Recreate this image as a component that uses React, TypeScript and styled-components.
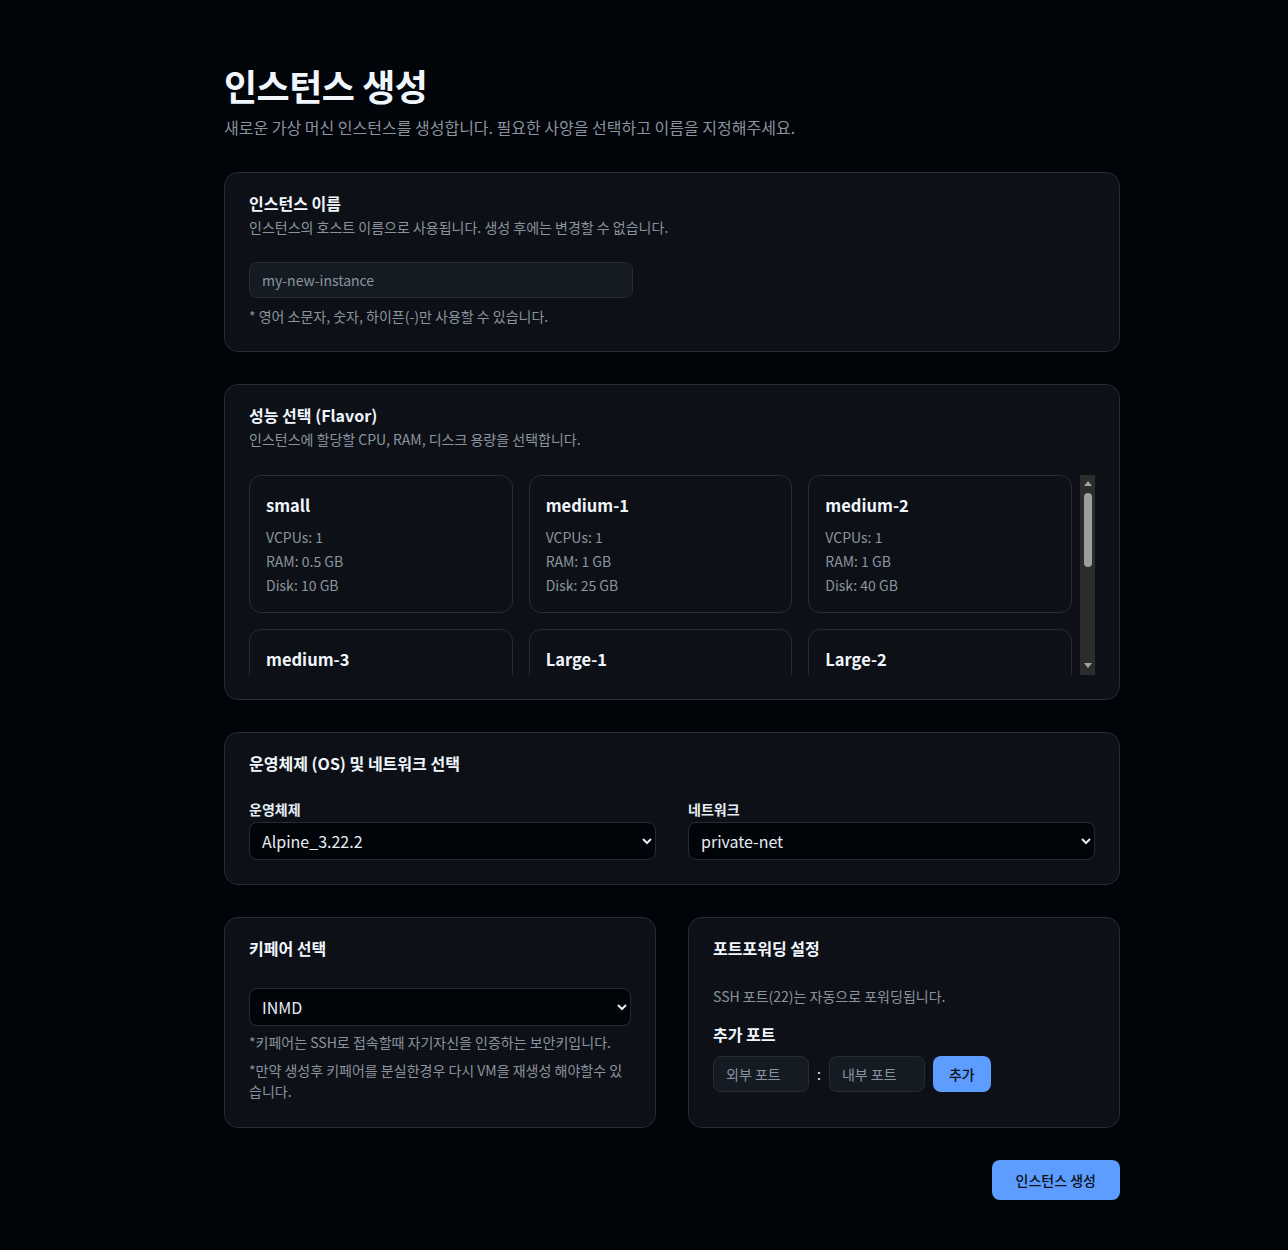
import React from "react";
import styled, { createGlobalStyle } from "styled-components";

const Global = createGlobalStyle`
  html { color-scheme: dark; }
  body {
    margin: 0;
    background: #010409;
    color: #e6edf3;
    font-family: "Noto Sans CJK KR", "Noto Sans", sans-serif;
  }
  * { box-sizing: border-box; }
`;

const Page = styled.main`
  width: 896px;
  margin: 0 0 0 224px;
  padding: 59px 0 50px;
  display: flex;
  flex-direction: column;
  gap: 32px;
`;

const Header = styled.header`
  display: flex;
  flex-direction: column;
  gap: 4px;
  margin-bottom: 1px;
`;

const Title = styled.h1`
  margin: 0;
  font-size: 36px;
  font-weight: 700;
  line-height: 52px;
  letter-spacing: -0.5px;
  color: #f0f6fc;
`;

const Subtitle = styled.p`
  margin: 0;
  font-size: 16px;
  line-height: 24px;
  color: #8b949e;
`;

const Card = styled.section<{ $pb?: number }>`
  background: #0d1117;
  border: 1px solid #262c36;
  border-radius: 14px;
  padding: 18px 24px ${(p) => p.$pb ?? 24}px;
  display: flex;
  flex-direction: column;
`;

const CardTitle = styled.h2`
  margin: 0 0 2px;
  font-size: 16px;
  font-weight: 700;
  line-height: 24px;
  color: #f0f6fc;
`;

const CardDesc = styled.p`
  margin: 0;
  font-size: 14px;
  line-height: 20px;
  color: #8b949e;
`;

const Spacer = styled.div<{ $h: number }>`
  height: ${(p) => p.$h}px;
  flex: none;
`;

const TextInput = styled.input<{ $w: number }>`
  width: ${(p) => p.$w}px;
  height: 36px;
  background: #151b23;
  border: 1px solid #262c36;
  border-radius: 8px;
  padding: 0 12px;
  font-family: inherit;
  font-size: 14px;
  color: #e6edf3;
  outline: none;
  &::placeholder { color: #8b949e; }
`;

const Hint = styled.p<{ $mt?: number }>`
  margin: ${(p) => p.$mt ?? 8}px 0 0;
  font-size: 14px;
  line-height: 21px;
  color: #8b949e;
`;

const FlavorArea = styled.div`
  margin-top: 26px;
  height: 200px;
  display: flex;
`;

const FlavorScroll = styled.div`
  flex: 1;
  min-width: 0;
  overflow: hidden;
`;

const FlavorGrid = styled.div`
  display: grid;
  grid-template-columns: repeat(3, 1fr);
  gap: 16px;
  padding-right: 8px;
`;

const FlavorCard = styled.div`
  border: 1px solid #262c36;
  border-radius: 12px;
  padding: 15px 16px 15px;
  display: flex;
  flex-direction: column;
`;

const FlavorName = styled.h3`
  margin: 0 0 6px;
  font-size: 16.5px;
  font-weight: 700;
  line-height: 28px;
  color: #f0f6fc;
`;

const Spec = styled.div`
  font-size: 14px;
  line-height: 24px;
  color: #8b949e;
`;

const ScrollTrack = styled.div`
  width: 15px;
  flex: none;
  background: #2c2c2c;
  display: flex;
  flex-direction: column;
  align-items: center;
  padding: 6px 0 7px;
`;

const Arrow = styled.div<{ $down?: boolean }>`
  width: 0;
  height: 0;
  border-left: 4.5px solid transparent;
  border-right: 4.5px solid transparent;
  ${(p) =>
    p.$down
      ? "border-top: 5px solid #a3a3a3; margin-top: auto;"
      : "border-bottom: 5px solid #a3a3a3;"}
`;

const Thumb = styled.div`
  width: 8px;
  height: 74px;
  margin-top: 7px;
  border-radius: 4px;
  background: #9e9e9e;
`;

const TwoCol = styled.div`
  display: grid;
  grid-template-columns: 1fr 1fr;
  gap: 32px;
`;

const Field = styled.label`
  display: flex;
  flex-direction: column;
  gap: 2px;
`;

const FieldLabel = styled.span`
  font-size: 14px;
  font-weight: 600;
  line-height: 22px;
  color: #e6edf3;
`;

const Select = styled.select`
  width: 100%;
  height: 38px;
  background: #010409;
  border: 1px solid #262c36;
  border-radius: 8px;
  padding: 0 8px;
  font-family: inherit;
  font-size: 16px;
  color: #e6edf3;
`;

const SubHeading = styled.h4`
  margin: 15px 0 10px;
  font-size: 16px;
  font-weight: 700;
  line-height: 24px;
  color: #f0f6fc;
`;

const PortRow = styled.div`
  display: flex;
  align-items: center;
  gap: 8px;
`;

const Colon = styled.span`
  font-size: 14px;
  color: #e6edf3;
`;

const Button = styled.button<{ $h: number; $px: number }>`
  height: ${(p) => p.$h}px;
  padding: 0 ${(p) => p.$px}px;
  background: #5c9dff;
  border: none;
  border-radius: 8px;
  font-family: inherit;
  font-size: 14px;
  font-weight: 500;
  color: #0d1117;
  cursor: pointer;
`;

const Footer = styled.div`
  display: flex;
  justify-content: flex-end;
`;

const flavors = [
  { name: "small", vcpu: 1, ram: "0.5", disk: 10 },
  { name: "medium-1", vcpu: 1, ram: "1", disk: 25 },
  { name: "medium-2", vcpu: 1, ram: "1", disk: 40 },
  { name: "medium-3", vcpu: 2, ram: "2", disk: 40 },
  { name: "Large-1", vcpu: 2, ram: "4", disk: 40 },
  { name: "Large-2", vcpu: 4, ram: "8", disk: 80 },
];

export default function App() {
  return (
    <>
      <Global />
      <Page>
        <Header>
          <Title>인스턴스 생성</Title>
          <Subtitle>새로운 가상 머신 인스턴스를 생성합니다. 필요한 사양을 선택하고 이름을 지정해주세요.</Subtitle>
        </Header>

        <Card>
          <CardTitle>인스턴스 이름</CardTitle>
          <CardDesc>인스턴스의 호스트 이름으로 사용됩니다. 생성 후에는 변경할 수 없습니다.</CardDesc>
          <Spacer $h={25} />
          <TextInput $w={384} placeholder="my-new-instance" />
          <Hint>* 영어 소문자, 숫자, 하이픈(-)만 사용할 수 있습니다.</Hint>
        </Card>

        <Card>
          <CardTitle>성능 선택 (Flavor)</CardTitle>
          <CardDesc>인스턴스에 할당할 CPU, RAM, 디스크 용량을 선택합니다.</CardDesc>
          <FlavorArea>
            <FlavorScroll>
              <FlavorGrid>
                {flavors.map((f) => (
                  <FlavorCard key={f.name}>
                    <FlavorName>{f.name}</FlavorName>
                    <Spec>VCPUs: {f.vcpu}</Spec>
                    <Spec>RAM: {f.ram} GB</Spec>
                    <Spec>Disk: {f.disk} GB</Spec>
                  </FlavorCard>
                ))}
              </FlavorGrid>
            </FlavorScroll>
            <ScrollTrack aria-hidden>
              <Arrow />
              <Thumb />
              <Arrow $down />
            </ScrollTrack>
          </FlavorArea>
        </Card>

        <Card>
          <CardTitle>운영체제 (OS) 및 네트워크 선택</CardTitle>
          <Spacer $h={21} />
          <TwoCol>
            <Field>
              <FieldLabel>운영체제</FieldLabel>
              <Select defaultValue="alpine">
                <option value="alpine">Alpine_3.22.2</option>
              </Select>
            </Field>
            <Field>
              <FieldLabel>네트워크</FieldLabel>
              <Select defaultValue="private">
                <option value="private">private-net</option>
              </Select>
            </Field>
          </TwoCol>
        </Card>

        <TwoCol>
          <Card $pb={25}>
            <CardTitle>키페어 선택</CardTitle>
            <Spacer $h={26} />
            <Select defaultValue="inmd">
              <option value="inmd">INMD</option>
            </Select>
            <Hint $mt={6}>*키페어는 SSH로 접속할때 자기자신을 인증하는 보안키입니다.</Hint>
            <Hint $mt={7}>*만약 생성후 키페어를 분실한경우 다시 VM을 재생성 해야할수 있습니다.</Hint>
          </Card>
          <Card>
            <CardTitle>포트포워딩 설정</CardTitle>
            <Hint $mt={24}>SSH 포트(22)는 자동으로 포워딩됩니다.</Hint>
            <SubHeading>추가 포트</SubHeading>
            <PortRow>
              <TextInput $w={96} placeholder="외부 포트" />
              <Colon>:</Colon>
              <TextInput $w={96} placeholder="내부 포트" />
              <Button $h={36} $px={16}>추가</Button>
            </PortRow>
          </Card>
        </TwoCol>

        <Footer>
          <Button $h={40} $px={24}>인스턴스 생성</Button>
        </Footer>
      </Page>
    </>
  );
}
